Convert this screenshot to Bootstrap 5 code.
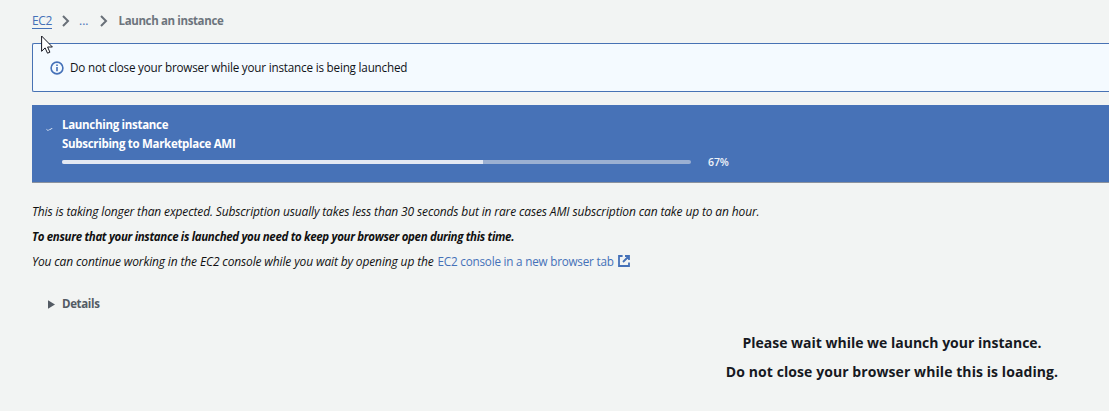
<!doctype html>
<html lang="en">
<head>
<meta charset="utf-8">
<meta name="viewport" content="width=device-width, initial-scale=1">
<title>Launch an instance</title>
<link href="https://cdn.jsdelivr.net/npm/bootstrap@5.3.0/dist/css/bootstrap.min.css" rel="stylesheet">
<style>
  body { background: #f2f4f3; color: #16191f; font: 400 12px/18px "Open Sans", "Noto Sans", sans-serif; height: 411px; }
  .console { padding-left: 32px; }
  a { color: #4571b8; text-decoration: none; }
  .crumbs { height: 43px; padding-bottom: 2px; }
  .crumbs a.ec2 { letter-spacing: -.35px; border-bottom: 1px solid #4571b8; line-height: 15px; margin-top: 1px; }
  .crumb-now { color: #6d747d; font-size: 11.5px; font-weight: 700; letter-spacing: -.37px; }
  .notice { height: 49px; border: 1px solid #4772b4; border-right: 0; border-radius: 2px 0 0 2px; background: #f4faff; padding-left: 17px; margin-bottom: 13px; font-size: 11.7px; letter-spacing: -.2px; }
  .notice-text { margin-left: 6px; padding-bottom: 2px; color: #101318; }
  .launch { height: 78px; background: #4772b7; border-bottom: 1px solid #8b929d; color: #fff; padding: 10px 0 0 14px; margin-bottom: 16px; }
  .launch-title { font-size: 11.5px; line-height: 19px; font-weight: 700; letter-spacing: -.3px; }
  .launch-meter { margin-top: 2px; height: 14px; }
  .launch-bar { width: 629px; height: 4px; border-radius: 2px; background: #9bb0d2; }
  .launch-bar .progress-bar { background: #e3e8f2; }
  .pct { font-size: 10.5px; font-weight: 600; line-height: 14px; letter-spacing: -.1px; color: #eef2f8; padding-bottom: 1px; }
  .story p { height: 25px; line-height: 25px; margin: 0; letter-spacing: -.14px; color: #111; white-space: nowrap; }
  .story .keep { font-size: 11.5px; letter-spacing: -.34px; }
  .story a { font-style: normal; font-size: 11.7px; letter-spacing: -.21px; }
  .story a svg { margin-top: -1px; }
  .details { color: #545b64; font-size: 11.5px; font-weight: 700; letter-spacing: -.35px; margin-top: 21px; padding-left: 16px; }
  .wait { font-size: 14px; line-height: 29px; font-weight: 700; margin: 15px 0 0 643px; }
  .wait .second { letter-spacing: .08px; }
  .pointer { left: 41px; top: 35px; }
</style>
</head>
<body class="overflow-hidden position-relative">
<main class="console">
  <nav class="crumbs d-flex align-items-center" aria-label="breadcrumb">
    <a class="ec2" href="#">EC2</a>
    <svg style="margin-left:10px" width="8" height="12" viewBox="0 0 8 12" fill="none" stroke="#697078" stroke-width="2"><path d="M1 1l5 5-5 5"/></svg>
    <a href="#" style="margin-left:9px">...</a>
    <svg style="margin-left:11px" width="8" height="12" viewBox="0 0 8 12" fill="none" stroke="#697078" stroke-width="2"><path d="M1 1l5 5-5 5"/></svg>
    <span class="crumb-now" style="margin-left:11px">Launch an instance</span>
  </nav>

  <div class="notice d-flex align-items-center">
    <svg class="flex-shrink-0" width="14" height="14" viewBox="0 0 14 14" fill="none" stroke="#4571b8" stroke-width="1.6"><circle cx="7" cy="7" r="5.9"/><path d="M7 6v4.3M7 3.4v1.5"/></svg>
    <span class="notice-text">Do not close your browser while your instance is being launched</span>
  </div>

  <section class="launch d-flex">
    <svg class="flex-shrink-0" style="margin-top:12px" width="7" height="5" viewBox="0 0 7 5" fill="none" stroke="#dfe7f5"><path d="M.5 2.4l1 .8h1.2M3.3 2.7l2-.7.9-1"/></svg>
    <div style="margin-left:9px">
      <div class="launch-title">Launching instance</div>
      <div class="launch-title">Subscribing to Marketplace AMI</div>
      <div class="launch-meter d-flex align-items-center">
        <div class="progress launch-bar" role="progressbar" aria-valuenow="67" aria-valuemin="0" aria-valuemax="100"><div class="progress-bar" style="width:67%"></div></div>
        <span class="pct" style="margin-left:17px">67%</span>
      </div>
    </div>
  </section>

  <section class="story fst-italic">
    <p>This is taking longer than expected. Subscription usually takes less than 30 seconds but in rare cases AMI subscription can take up to an hour.</p>
    <p class="keep fw-bold">To ensure that your instance is launched you need to keep your browser open during this time.</p>
    <p class="d-flex align-items-center"><span>You can continue working in the EC2 console while you wait by opening up the</span>
      <a class="ms-1 d-flex align-items-center" href="#">EC2 console in a new browser tab
        <svg class="ms-1" width="12" height="12" viewBox="0 0 12 12" fill="none" stroke="#4571b8" stroke-width="1.8"><path d="M4.6 1H1v10h10V7.5M7 1h4v4M11 1L5 7"/></svg></a></p>
  </section>

  <div class="details d-flex align-items-center">
    <svg width="7" height="9" viewBox="0 0 7 9" fill="#545b64"><path d="M0 .2L7 4.5 0 8.8z"/></svg>
    <span style="margin-left:7px">Details</span>
  </div>

  <div class="wait text-center">
    <div>Please wait while we launch your instance.</div>
    <div class="second">Do not close your browser while this is loading.</div>
  </div>
</main>
<svg class="pointer position-absolute" width="13" height="20" viewBox="0 0 13 20"><path d="M.6 1v15.3l3.5-3.4 2.4 5.3 2.4-1-2.3-5.2h4.8z" fill="#fff" stroke="#15161f" stroke-width="1"/></svg>
<script src="https://cdn.jsdelivr.net/npm/bootstrap@5.3.0/dist/js/bootstrap.bundle.min.js"></script>
</body>
</html>
